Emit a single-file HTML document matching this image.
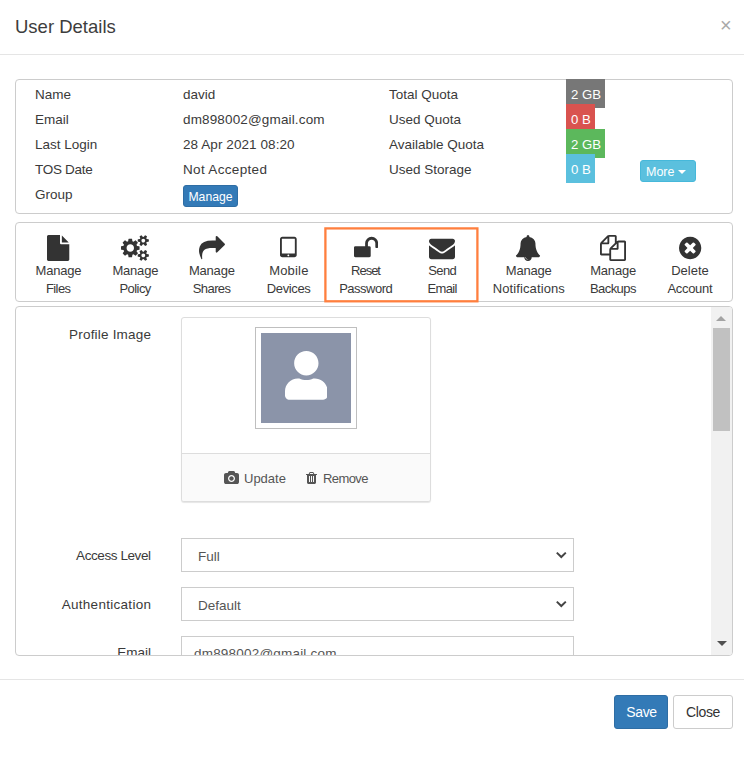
<!DOCTYPE html>
<html lang="en">
<head>
<meta charset="utf-8">
<title>User Details</title>
<style>
*{box-sizing:border-box;margin:0;padding:0}
html,body{width:744px;height:757px;background:#fff;overflow:hidden}
body{position:relative;font-family:"Liberation Sans",sans-serif;font-size:13.5px;color:#3a3a3a}
.abs{position:absolute}
.t{position:absolute;white-space:nowrap;line-height:18px;height:18px;margin-top:1px}
.title{left:15px;top:14px;margin-top:1px;font-size:18.5px;line-height:24px;height:24px;color:#3d3d3d}
.close{left:719.9px;top:11.7px;font-size:20px;line-height:24px;height:24px;color:#a9a9a9;font-weight:normal}
.hr{left:0;width:744px;height:1px;background:#e5e5e5}
.panel{border:1px solid #ccc;border-radius:4px;background:#fff}
.badge{position:absolute;left:566px;height:29px;color:#fff;font-size:13.2px;line-height:31px;padding-left:5px}
.btn{position:absolute;border-radius:3px;color:#fff;text-align:center;white-space:nowrap}
.tb{position:absolute;width:100px;text-align:center;line-height:18px;font-size:13px;color:#3a3a3a}
.ico{position:absolute}
.lab{position:absolute;margin-top:1px;text-align:right;width:136px;left:15px;line-height:18px;white-space:nowrap}
.sel{position:absolute;left:181px;width:393px;height:34px;border:1px solid #ccc;background:#fff;padding-left:16px;line-height:34px;color:#555}
</style>
</head>
<body>
<!-- header -->
<div class="t title">User Details</div>
<div class="t close">×</div>
<div class="abs hr" style="top:54px"></div>

<!-- info panel -->
<div class="abs panel" style="left:15px;top:79px;width:718px;height:135px"></div>
<div class="t" style="left:35px;top:85px">Name</div>
<div class="t" style="left:35px;top:110px">Email</div>
<div class="t" style="left:35px;top:135px">Last Login</div>
<div class="t" style="left:35px;top:160px;letter-spacing:-.3px">TOS Date</div>
<div class="t" style="left:35px;top:185px">Group</div>
<div class="t" style="left:183px;top:85px">david</div>
<div class="t" style="left:183px;top:110px;letter-spacing:.15px">dm898002@gmail.com</div>
<div class="t" style="left:183px;top:135px;letter-spacing:.08px">28 Apr 2021 08:20</div>
<div class="t" style="left:183px;top:160px;letter-spacing:.33px">Not Accepted</div>
<div class="btn" style="left:183px;top:185px;width:55px;height:22px;background:#337ab7;border:1px solid #2e6da4;font-size:12.2px;line-height:20px;padding-top:1px">Manage</div>
<div class="t" style="left:389px;top:85px">Total Quota</div>
<div class="t" style="left:389px;top:110px">Used Quota</div>
<div class="t" style="left:389px;top:135px">Available Quota</div>
<div class="t" style="left:389px;top:160px">Used Storage</div>
<div class="badge" style="top:79px;width:39px;background:#777">2 GB</div>
<div class="badge" style="top:104px;width:29px;background:#d9534f">0 B</div>
<div class="badge" style="top:129px;width:39px;background:#5cb85c">2 GB</div>
<div class="badge" style="top:154px;width:29px;background:#5bc0de">0 B</div>
<div class="btn" style="left:640px;top:160px;width:56px;height:22px;background:#5bc0de;border:1px solid #46b8da;font-size:12.5px;line-height:20px;text-align:left;padding:1px 0 0 5px">More<span style="display:inline-block;width:0;height:0;border-left:4px solid transparent;border-right:4px solid transparent;border-top:4px solid #fff;margin-left:4px;vertical-align:2px"></span></div>

<!-- toolbar panel -->
<div class="abs panel" style="left:15px;top:222px;width:718px;height:80px"></div>
<svg class="abs" style="left:320px;top:224px" width="164" height="84" viewBox="320 224 164 84"><rect x="325.4" y="228.4" width="152" height="72.9" fill="none" stroke="#ff7f3e" stroke-width="2.3"/></svg>
<div class="tb" style="left:8.5px;top:262px"><span style="letter-spacing:-0.2px;margin-right:0.2px">Manage</span><br><span style="letter-spacing:-0.6px;margin-right:0.6px">Files</span></div>
<div class="tb" style="left:85.4px;top:262px"><span style="letter-spacing:-0.2px;margin-right:0.2px">Manage</span><br><span style="letter-spacing:-0.55px;margin-right:0.55px">Policy</span></div>
<div class="tb" style="left:161.9px;top:262px"><span style="letter-spacing:-0.2px;margin-right:0.2px">Manage</span><br><span style="letter-spacing:-0.6px;margin-right:0.6px">Shares</span></div>
<div class="tb" style="left:238.8px;top:262px"><span style="letter-spacing:0.18px;margin-right:-0.18px">Mobile</span><br><span style="letter-spacing:-0.37px;margin-right:0.37px">Devices</span></div>
<div class="tb" style="left:316.0px;top:262px"><span style="letter-spacing:-1.0px;margin-right:1.0px">Reset</span><br><span style="letter-spacing:-0.5px;margin-right:0.5px">Password</span></div>
<div class="tb" style="left:392.5px;top:262px"><span style="letter-spacing:-0.6px;margin-right:0.6px">Send</span><br><span style="letter-spacing:-0.64px;margin-right:0.64px">Email</span></div>
<div class="tb" style="left:478.8px;top:262px"><span style="letter-spacing:-0.2px;margin-right:0.2px">Manage</span><br><span style="letter-spacing:0.1px;margin-right:-0.1px">Notifications</span></div>
<div class="tb" style="left:563.2px;top:262px"><span style="letter-spacing:-0.2px;margin-right:0.2px">Manage</span><br><span style="letter-spacing:-0.57px;margin-right:0.57px">Backups</span></div>
<div class="tb" style="left:640.0px;top:262px"><span style="letter-spacing:0px;margin-right:0px">Delete</span><br><span style="letter-spacing:-0.29px;margin-right:0.29px">Account</span></div>
<!-- ICONS -->
<svg class="ico" style="left:47.36px;top:234.5px" width="22.29" height="26" viewBox="0 -1536 1536 1792"><path transform="scale(1,-1)" fill="#333" d="M1024 1024v472q22 -14 36 -28l408 -408q14 -14 28 -36h-472zM896 992q0 -40 28 -68t68 -28h544v-1056q0 -40 -28 -68t-68 -28h-1344q-40 0 -68 28t-28 68v1600q0 40 28 68t68 28h800v-544z"/></svg>
<svg class="ico" style="left:121.37px;top:234.5px" width="27.86" height="26" viewBox="0 -1536 1920 1792"><path transform="scale(1,-1)" fill="#333" d="M896 640q0 106 -75 181t-181 75t-181 -75t-75 -181t75 -181t181 -75t181 75t75 181zM1664 128q0 52 -38 90t-90 38t-90 -38t-38 -90q0 -53 37.5 -90.5t90.5 -37.5t90.5 37.5t37.5 90.5zM1664 1152q0 52 -38 90t-90 38t-90 -38t-38 -90q0 -53 37.5 -90.5t90.5 -37.5 t90.5 37.5t37.5 90.5zM1280 731v-185q0 -10 -7 -19.5t-16 -10.5l-155 -24q-11 -35 -32 -76q34 -48 90 -115q7 -11 7 -20q0 -12 -7 -19q-23 -30 -82.5 -89.5t-78.5 -59.5q-11 0 -21 7l-115 90q-37 -19 -77 -31q-11 -108 -23 -155q-7 -24 -30 -24h-186q-11 0 -20 7.5t-10 17.5 l-23 153q-34 10 -75 31l-118 -89q-7 -7 -20 -7q-11 0 -21 8q-144 133 -144 160q0 9 7 19q10 14 41 53t47 61q-23 44 -35 82l-152 24q-10 1 -17 9.5t-7 19.5v185q0 10 7 19.5t16 10.5l155 24q11 35 32 76q-34 48 -90 115q-7 11 -7 20q0 12 7 20q22 30 82 89t79 59q11 0 21 -7 l115 -90q34 18 77 32q11 108 23 154q7 24 30 24h186q11 0 20 -7.5t10 -17.5l23 -153q34 -10 75 -31l118 89q8 7 20 7q11 0 21 -8q144 -133 144 -160q0 -8 -7 -19q-12 -16 -42 -54t-45 -60q23 -48 34 -82l152 -23q10 -2 17 -10.5t7 -19.5zM1920 198v-140q0 -16 -149 -31 q-12 -27 -30 -52q51 -113 51 -138q0 -4 -4 -7q-122 -71 -124 -71q-8 0 -46 47t-52 68q-20 -2 -30 -2t-30 2q-14 -21 -52 -68t-46 -47q-2 0 -124 71q-4 3 -4 7q0 25 51 138q-18 25 -30 52q-149 15 -149 31v140q0 16 149 31q13 29 30 52q-51 113 -51 138q0 4 4 7q4 2 35 20 t59 34t30 16q8 0 46 -46.5t52 -67.5q20 2 30 2t30 -2q51 71 92 112l6 2q4 0 124 -70q4 -3 4 -7q0 -25 -51 -138q17 -23 30 -52q149 -15 149 -31zM1920 1222v-140q0 -16 -149 -31q-12 -27 -30 -52q51 -113 51 -138q0 -4 -4 -7q-122 -71 -124 -71q-8 0 -46 47t-52 68 q-20 -2 -30 -2t-30 2q-14 -21 -52 -68t-46 -47q-2 0 -124 71q-4 3 -4 7q0 25 51 138q-18 25 -30 52q-149 15 -149 31v140q0 16 149 31q13 29 30 52q-51 113 -51 138q0 4 4 7q4 2 35 20t59 34t30 16q8 0 46 -46.5t52 -67.5q20 2 30 2t30 -2q51 71 92 112l6 2q4 0 124 -70 q4 -3 4 -7q0 -25 -51 -138q17 -23 30 -52q149 -15 149 -31z"/></svg>
<svg class="ico" style="left:199.00px;top:234.5px" width="26.00" height="26" viewBox="0 -1536 1792 1792"><path transform="scale(1,-1)" fill="#333" d="M1792 896q0 -26 -19 -45l-512 -512q-19 -19 -45 -19t-45 19t-19 45v256h-224q-98 0 -175.5 -6t-154 -21.5t-133 -42.5t-105.5 -69.5t-80 -101t-48.5 -138.5t-17.5 -181q0 -55 5 -123q0 -6 2.5 -23.5t2.5 -26.5q0 -15 -8.5 -25t-23.5 -10q-16 0 -28 17q-7 9 -13 22 t-13.5 30t-10.5 24q-127 285 -127 451q0 199 53 333q162 403 875 403h224v256q0 26 19 45t45 19t45 -19l512 -512q19 -19 19 -45z"/></svg>
<svg class="ico" style="left:280.44px;top:234.5px" width="16.71" height="26" viewBox="0 -1536 1152 1792"><path transform="scale(1,-1)" fill="#333" d="M640 128q0 26 -19 45t-45 19t-45 -19t-19 -45t19 -45t45 -19t45 19t19 45zM1024 288v960q0 13 -9.5 22.5t-22.5 9.5h-832q-13 0 -22.5 -9.5t-9.5 -22.5v-960q0 -13 9.5 -22.5t22.5 -9.5h832q13 0 22.5 9.5t9.5 22.5zM1152 1248v-1088q0 -66 -47 -113t-113 -47h-832 q-66 0 -113 47t-47 113v1088q0 66 47 113t113 47h832q66 0 113 -47t47 -113z"/></svg>
<svg class="ico" style="left:353.93px;top:234.5px" width="24.14" height="26" viewBox="0 -1536 1664 1792"><path transform="scale(1,-1)" fill="#333" d="M1664 960v-256q0 -26 -19 -45t-45 -19h-64q-26 0 -45 19t-19 45v256q0 106 -75 181t-181 75t-181 -75t-75 -181v-192h96q40 0 68 -28t28 -68v-576q0 -40 -28 -68t-68 -28h-960q-40 0 -68 28t-28 68v576q0 40 28 68t68 28h672v192q0 185 131.5 316.5t316.5 131.5 t316.5 -131.5t131.5 -316.5z"/></svg>
<svg class="ico" style="left:429.40px;top:234.5px" width="26.00" height="26" viewBox="0 -1536 1792 1792"><path transform="scale(1,-1)" fill="#333" d="M1792 826v-794q0 -66 -47 -113t-113 -47h-1472q-66 0 -113 47t-47 113v794q44 -49 101 -87q362 -246 497 -345q57 -42 92.5 -65.5t94.5 -48t110 -24.5h1h1q51 0 110 24.5t94.5 48t92.5 65.5q170 123 498 345q57 39 100 87zM1792 1120q0 -79 -49 -151t-122 -123 q-376 -261 -468 -325q-10 -7 -42.5 -30.5t-54 -38t-52 -32.5t-57.5 -27t-50 -9h-1h-1q-23 0 -50 9t-57.5 27t-52 32.5t-54 38t-42.5 30.5q-91 64 -262 182.5t-205 142.5q-62 42 -117 115.5t-55 136.5q0 78 41.5 130t118.5 52h1472q65 0 112.5 -47t47.5 -113z"/></svg>
<svg class="ico" style="left:515.00px;top:234.5px" width="26.00" height="26" viewBox="0 -1536 1792 1792"><path transform="scale(1,-1)" fill="#333" d="M912 -160q0 16 -16 16q-59 0 -101.5 42.5t-42.5 101.5q0 16 -16 16t-16 -16q0 -73 51.5 -124.5t124.5 -51.5q16 0 16 16zM1728 128q0 -52 -38 -90t-90 -38h-448q0 -106 -75 -181t-181 -75t-181 75t-75 181h-448q-52 0 -90 38t-38 90q50 42 91 88t85 119.5t74.5 158.5 t50 206t19.5 260q0 152 117 282.5t307 158.5q-8 19 -8 39q0 40 28 68t68 28t68 -28t28 -68q0 -20 -8 -39q190 -28 307 -158.5t117 -282.5q0 -139 19.5 -260t50 -206t74.5 -158.5t85 -119.5t91 -88z"/></svg>
<svg class="ico" style="left:600.00px;top:234.5px" width="26.00" height="26" viewBox="0 -1536 1792 1792"><path transform="scale(1,-1)" fill="#333" d="M1696 1152q40 0 68 -28t28 -68v-1216q0 -40 -28 -68t-68 -28h-960q-40 0 -68 28t-28 68v288h-544q-40 0 -68 28t-28 68v672q0 40 20 88t48 76l408 408q28 28 76 48t88 20h416q40 0 68 -28t28 -68v-328q68 40 128 40h416zM1152 939l-299 -299h299v299zM512 1323l-299 -299 h299v299zM708 676l316 316v416h-384v-416q0 -40 -28 -68t-68 -28h-416v-640h512v256q0 40 20 88t48 76zM1664 -128v1152h-384v-416q0 -40 -28 -68t-68 -28h-416v-640h896z"/></svg>
<svg class="ico" style="left:679.26px;top:234.5px" width="22.29" height="26" viewBox="0 -1536 1536 1792"><path transform="scale(1,-1)" fill="#333" d="M1149 414q0 26 -19 45l-181 181l181 181q19 19 19 45q0 27 -19 46l-90 90q-19 19 -46 19q-26 0 -45 -19l-181 -181l-181 181q-19 19 -45 19q-27 0 -46 -19l-90 -90q-19 -19 -19 -46q0 -26 19 -45l181 -181l-181 -181q-19 -19 -19 -45q0 -27 19 -46l90 -90q19 -19 46 -19 q26 0 45 19l181 181l181 -181q19 -19 45 -19q27 0 46 19l90 90q19 19 19 46zM1536 640q0 -209 -103 -385.5t-279.5 -279.5t-385.5 -103t-385.5 103t-279.5 279.5t-103 385.5t103 385.5t279.5 279.5t385.5 103t385.5 -103t279.5 -279.5t103 -385.5z"/></svg>

<!-- scroll panel -->
<div class="abs panel" style="left:15px;top:306px;width:718px;height:350px;overflow:hidden">
</div>
<div class="abs" style="left:711px;top:307px;width:21px;height:348px;background:#f1f1f1;border-radius:0 3px 3px 0"></div>
<div class="abs" style="left:713px;top:328px;width:17px;height:103px;background:#c1c1c1"></div>
<div class="abs" style="left:716.1px;top:316px;width:0;height:0;border-left:5px solid transparent;border-right:5px solid transparent;border-bottom:5px solid #a3a3a3"></div>
<div class="abs" style="left:716.7px;top:641px;width:0;height:0;border-left:5px solid transparent;border-right:5px solid transparent;border-top:5px solid #505050"></div>

<div class="lab" style="top:325px;letter-spacing:.2px;left:15.2px">Profile Image</div>
<div class="abs" style="left:181px;top:317px;width:250px;height:185px;border:1px solid #ddd;border-radius:3px;background:#fff;box-shadow:0 1px 1px rgba(0,0,0,.1)"></div>
<div class="abs" style="left:182px;top:453px;width:248px;height:48px;background:#fafafa;border-top:1px solid #ddd;border-radius:0 0 2px 2px"></div>
<div class="abs" style="left:255px;top:327px;width:102px;height:102px;border:1px solid #bfbfbf;background:#fff"></div>
<div class="abs" style="left:261px;top:333px;width:90px;height:90px;background:#8b94a9"></div>
<svg class="abs" style="left:284.7px;top:351.1px" width="42.65" height="48.75" viewBox="0 0 448 512"><path fill="#fff" d="M224 256c70.7 0 128-57.3 128-128S294.7 0 224 0 96 57.3 96 128s57.3 128 128 128zm89.600 32h-16.700c-22.200 10.200-46.900 16-72.900 16s-50.600-5.800-72.900-16h-16.700C60.200 288 0 348.200 0 422.400V464c0 26.500 21.500 48 48 48h352c26.500 0 48-21.500 48-48v-41.600c0-74.200-60.200-134.400-134.400-134.400z"/></svg>
<svg class="ico" style="left:223.50px;top:471.1px" width="15.00" height="14" viewBox="0 -1536 1920 1792"><path transform="scale(1,-1)" fill="#555" d="M960 864q119 0 203.5 -84.5t84.5 -203.5t-84.5 -203.5t-203.5 -84.5t-203.5 84.5t-84.5 203.5t84.5 203.5t203.5 84.5zM1664 1280q106 0 181 -75t75 -181v-896q0 -106 -75 -181t-181 -75h-1408q-106 0 -181 75t-75 181v896q0 106 75 181t181 75h224l51 136 q19 49 69.5 84.5t103.5 35.5h512q53 0 103.5 -35.5t69.5 -84.5l51 -136h224zM960 128q185 0 316.5 131.5t131.5 316.5t-131.5 316.5t-316.5 131.5t-316.5 -131.5t-131.5 -316.5t131.5 -316.5t316.5 -131.5z"/></svg>
<svg class="ico" style="left:305.80px;top:471.2px" width="11.00" height="14" viewBox="0 -1536 1408 1792"><path transform="scale(1,-1)" fill="#555" d="M512 160v704q0 14 -9 23t-23 9h-64q-14 0 -23 -9t-9 -23v-704q0 -14 9 -23t23 -9h64q14 0 23 9t9 23zM768 160v704q0 14 -9 23t-23 9h-64q-14 0 -23 -9t-9 -23v-704q0 -14 9 -23t23 -9h64q14 0 23 9t9 23zM1024 160v704q0 14 -9 23t-23 9h-64q-14 0 -23 -9t-9 -23v-704 q0 -14 9 -23t23 -9h64q14 0 23 9t9 23zM480 1152h448l-48 117q-7 9 -17 11h-317q-10 -2 -17 -11zM1408 1120v-64q0 -14 -9 -23t-23 -9h-96v-948q0 -83 -47 -143.5t-113 -60.5h-832q-66 0 -113 58.5t-47 141.5v952h-96q-14 0 -23 9t-9 23v64q0 14 9 23t23 9h309l70 167 q15 37 54 63t79 26h320q40 0 79 -26t54 -63l70 -167h309q14 0 23 -9t9 -23z"/></svg>
<div class="t" style="left:244px;top:469px;font-size:13px;color:#555">Update</div>
<div class="t" style="left:323px;top:469px;font-size:13px;color:#555;letter-spacing:-0.6px">Remove</div>

<div class="lab" style="top:546px;letter-spacing:-.42px;left:14.6px">Access Level</div>
<div class="sel" style="top:538px;line-height:35px">Full</div>
<svg class="abs" style="left:555px;top:551px" width="13" height="9" viewBox="0 0 13 9"><path d="M1.8 1.6 L6.3 6 L10.8 1.6" fill="none" stroke="#444" stroke-width="2"/></svg>
<div class="lab" style="top:595px;letter-spacing:.29px;left:15.3px">Authentication</div>
<div class="sel" style="top:587px;line-height:35px">Default</div>
<svg class="abs" style="left:555px;top:600px" width="13" height="9" viewBox="0 0 13 9"><path d="M1.8 1.6 L6.3 6 L10.8 1.6" fill="none" stroke="#444" stroke-width="2"/></svg>
<div class="abs" style="left:16px;top:636px;width:695px;height:19px;overflow:hidden">
  <div class="lab" style="left:-1px;top:7px">Email</div>
  <div class="sel" style="left:165px;top:0;padding-left:12px;letter-spacing:.2px">dm898002@gmail.com</div>
</div>

<!-- footer -->
<div class="abs hr" style="top:679px"></div>
<div class="btn" style="left:614px;top:695px;width:54px;height:34px;background:#337ab7;border:1px solid #2e6da4;font-size:14px;line-height:32px;letter-spacing:-.3px;padding-left:1px">Save</div>
<div class="btn" style="left:673px;top:695px;width:60px;height:34px;background:#fff;border:1px solid #ccc;color:#333;font-size:14px;line-height:32px;letter-spacing:-.4px">Close</div>
</body>
</html>
